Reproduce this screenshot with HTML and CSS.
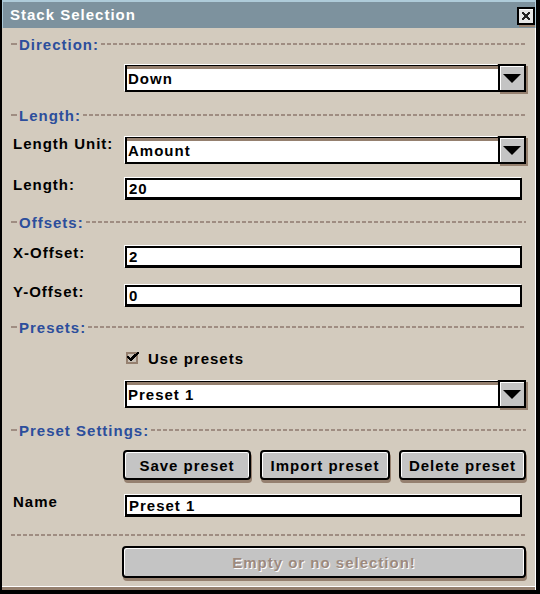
FILE: index.html
```html
<!DOCTYPE html>
<html>
<head>
<meta charset="utf-8">
<link rel="stylesheet" href="styles.css">
</head>
<body>
<div class="window">
  <div class="titlebar">
    <span class="title">Stack Selection</span>
    <span class="close">
      <svg width="18" height="20" viewBox="0 0 18 20" shape-rendering="crispEdges">
        <rect x="2" y="17" width="16" height="3" fill="#95806f"/>
        <rect x="0" y="0" width="18" height="18" fill="#000"/>
        <rect x="2" y="2" width="14" height="14" fill="#e6e6e6"/>
        <rect x="2" y="2" width="14" height="1" fill="#fff"/>
        <path d="M5 5h2v1h1v1h2v-1h1v-1h2v2h-1v1h-1v2h1v1h1v2h-2v-1h-1v-1h-2v1h-1v1h-2v-2h1v-1h1v-2h-1v-1h-1z" fill="#222"/>
      </svg>
    </span>
  </div>
  <div class="content">
    <div class="section s-direction"><span class="dash"></span><span class="section-label">Direction:</span><span class="rule"></span></div>
    <div class="row r-direction">
      <div class="label"></div>
      <div class="combo"><div class="combo-field">Down</div><div class="combo-btn"><span class="tri"></span></div></div>
    </div>

    <div class="section s-length"><span class="dash"></span><span class="section-label">Length:</span><span class="rule"></span></div>
    <div class="row r-unit">
      <div class="label">Length Unit:</div>
      <div class="combo"><div class="combo-field">Amount</div><div class="combo-btn"><span class="tri"></span></div></div>
    </div>
    <div class="row r-length">
      <div class="label">Length:</div>
      <div class="entry">20</div>
    </div>

    <div class="section s-offsets"><span class="dash"></span><span class="section-label">Offsets:</span><span class="rule"></span></div>
    <div class="row r-x">
      <div class="label">X-Offset:</div>
      <div class="entry">2</div>
    </div>
    <div class="row r-y">
      <div class="label">Y-Offset:</div>
      <div class="entry">0</div>
    </div>

    <div class="section s-presets"><span class="dash"></span><span class="section-label">Presets:</span><span class="rule"></span></div>
    <div class="row r-check">
      <div class="label"></div>
      <div class="check">
        <svg width="14" height="14" viewBox="0 0 14 14" shape-rendering="crispEdges">
          <rect x="0" y="1" width="12" height="12" fill="#95806f"/>
          <rect x="2" y="3" width="8" height="8" fill="#c9c1b6"/>
          <path d="M11 1h2v2h-1v1h-1v1h-1v1h-1v1h-1v1h-1v1h-1v1h-2v-1h-1v-1h-1v-1h-1v-2h2v1h1v1h1v-1h1v-1h1v-1h1v-1h1z" fill="#000"/>
        </svg>
        <span class="check-text">Use presets</span>
      </div>
    </div>
    <div class="row r-preset">
      <div class="label"></div>
      <div class="combo"><div class="combo-field">Preset 1</div><div class="combo-btn"><span class="tri"></span></div></div>
    </div>

    <div class="section s-settings"><span class="dash"></span><span class="section-label">Preset Settings:</span><span class="rule"></span></div>
    <div class="row r-buttons">
      <div class="label"></div>
      <div class="buttons">
        <div class="btn b-save">Save preset</div>
        <div class="btn b-import">Import preset</div>
        <div class="btn b-delete">Delete preset</div>
      </div>
    </div>
    <div class="row r-name">
      <div class="label">Name</div>
      <div class="entry">Preset 1</div>
    </div>

    <div class="section s-end"><span class="rule"></span></div>
    <div class="row r-ok">
      <div class="label"></div>
      <div class="btn btn-wide disabled">Empty or no selection!</div>
    </div>
  </div>
</div>
</body>
</html>
```

FILE: styles.css
```css
* { box-sizing: border-box; }
html, body { margin: 0; padding: 0; }
body {
  width: 540px;
  height: 594px;
  overflow: hidden;
  font-family: "Liberation Sans", Arial, sans-serif;
  font-weight: bold;
  font-size: 15px;
  letter-spacing: 1px;
  color: #000;
}
.window {
  width: 540px;
  height: 594px;
  display: flex;
  flex-direction: column;
  border-left: 2px solid #000;
  border-right: 4px solid #000;
  border-bottom: 4px solid #000;
  background: #d3cbbe;
}
.titlebar {
  height: 28px;
  flex: none;
  background: #7d929e;
  border-top: 2px solid #aecbd9;
  border-left: 1px solid #aecbd9;
  border-right: 1px solid #aecbd9;
  display: flex;
  align-items: center;
  justify-content: space-between;
  padding: 0 0 0 7px;
}
.title {
  color: #fff;
  font-size: 15px;
  letter-spacing: 1px;
  margin-top: -2px;
}
.close { display: flex; margin-top: 4px; }
.content {
  flex: 1;
  display: flex;
  flex-direction: column;
  padding: 0 9px 0 11px;
  border-right: 1px solid #fff;
  box-shadow: inset 0 -3px 0 #95806f, inset 0 -4px 0 #fff;
}
.section {
  height: 16px;
  flex: none;
  display: flex;
  align-items: center;
  margin-left: -2px;
}
.dash {
  width: 6px;
  height: 2px;
  background: #9f8d82;
  margin-right: 2px;
}
.section-label {
  color: #2c4e9c;
  margin-right: 2px;
}
.rule {
  flex: 1;
  height: 2px;
  background: repeating-linear-gradient(90deg, #9f8d82 0 4px, transparent 4px 6px);
}
.row { display: flex; flex: none; }
.label {
  width: 112px;
  flex: none;
  line-height: 14px;
}
.combo {
  flex: 1;
  display: flex;
  height: 27px;
}
.combo-field {
  flex: 1;
  height: 27px;
  background: #fff;
  border: 2px solid #000;
  border-top-width: 1px;
  border-right: none;
  box-shadow: inset 0 3px 0 #95806f, -1px -1px 0 #fff;
  padding: 5px 0 0 1px;
  line-height: 16px;
}
.combo-btn {
  width: 28px;
  height: 28px;
  margin-top: -1px;
  background: #c4c4c4;
  border: 2px solid #000;
  box-shadow: inset 1px 1px 0 #fff, 2px 2px 0 #95806f;
  display: flex;
  align-items: center;
  justify-content: center;
}
.tri {
  width: 0;
  height: 0;
  border-left: 9px solid transparent;
  border-right: 9px solid transparent;
  border-top: 9px solid #000;
  margin-top: 1px;
}
.entry {
  flex: 1;
  height: 22px;
  margin-right: 4px;
  background: #fff;
  border: 2px solid #000;
  border-bottom-width: 3px;
  box-shadow: -1px -1px 0 #fff;
  padding: 1px 0 0 2px;
  line-height: 16px;
}
.check {
  display: flex;
  align-items: center;
  gap: 8px;
  padding-left: 1px;
  height: 16px;
}
.buttons {
  flex: 1;
  display: flex;
  gap: 9px;
  margin-left: -2px;
}
.btn {
  height: 30px;
  background: #c4c4c4;
  border: 2px solid #000;
  border-radius: 4px;
  box-shadow: inset 1px 1px 0 #fff, inset -1px 0 0 #fff, 1px 3px 0 #95806f;
  display: flex;
  align-items: center;
  justify-content: center;
}
.b-save { width: 128px; }
.b-import { width: 130px; }
.b-delete { flex: 1; }
.btn-wide { flex: 1; margin-left: -3px; height: 32px; }
.disabled {
  color: #9d8a7e;
  text-shadow: 1px 1px 0 #fff;
}
.s-direction { margin-top: 8px; }
.r-direction { margin-top: 13px; }
.s-length { margin-top: 15px; }
.r-unit { margin-top: 14px; }
.r-length { margin-top: 14px; }
.s-offsets { margin-top: 14px; }
.r-x { margin-top: 16px; }
.r-y { margin-top: 17px; }
.s-presets { margin-top: 12px; }
.r-check { margin-top: 15px; }
.r-preset { margin-top: 15px; }
.s-settings { margin-top: 14px; }
.r-buttons { margin-top: 12px; }
.r-name { margin-top: 15px; }
.s-end { margin-top: 10px; }
.r-ok { margin-top: 3px; }
```
